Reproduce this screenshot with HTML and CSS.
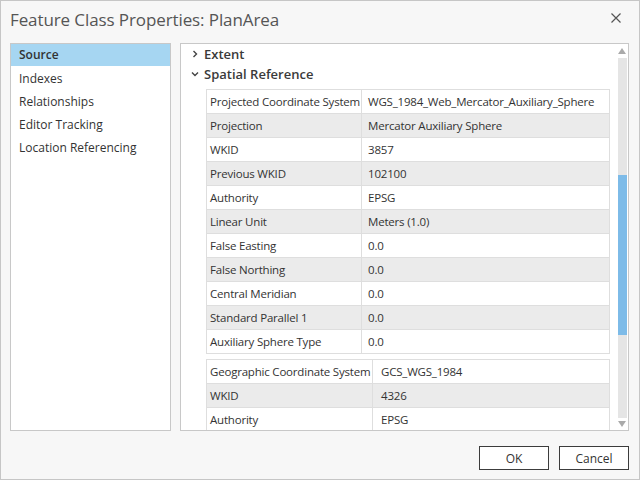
FILE: index.html
```html
<!DOCTYPE html>
<html>
<head>
<meta charset="utf-8">
<link rel="stylesheet" href="styles.css">
</head>
<body>
<div class="dialog">
  <div class="titlebar">
    <span class="title">Feature Class Properties: PlanArea</span>
    <span class="close">
      <svg width="10" height="10" viewBox="0 0 10 10"><path d="M0.5 0.5L9.5 9.5M9.5 0.5L0.5 9.5" stroke="#555" stroke-width="1.2" fill="none"/></svg>
    </span>
  </div>
  <div class="main">
    <div class="nav">
      <div class="nav-item selected">Source</div>
      <div class="nav-item">Indexes</div>
      <div class="nav-item">Relationships</div>
      <div class="nav-item">Editor Tracking</div>
      <div class="nav-item">Location Referencing</div>
    </div>
    <div class="panel">
      <div class="content">
        <div class="section">
          <svg class="chev" width="8" height="8" viewBox="0 0 8 8"><path d="M2.5 1L5.5 4L2.5 7" stroke="#444" stroke-width="1.4" fill="none"/></svg>
          <span>Extent</span>
        </div>
        <div class="section">
          <svg class="chev" width="8" height="8" viewBox="0 0 8 8"><path d="M1 2.5L4 5.5L7 2.5" stroke="#444" stroke-width="1.4" fill="none"/></svg>
          <span>Spatial Reference</span>
        </div>
        <table class="props t1">
          <colgroup><col class="kc"><col></colgroup>
          <tr><td class="k">Projected Coordinate System</td><td>WGS_1984_Web_Mercator_Auxiliary_Sphere</td></tr>
          <tr class="alt"><td class="k">Projection</td><td>Mercator Auxiliary Sphere</td></tr>
          <tr><td class="k">WKID</td><td>3857</td></tr>
          <tr class="alt"><td class="k">Previous WKID</td><td>102100</td></tr>
          <tr><td class="k">Authority</td><td>EPSG</td></tr>
          <tr class="alt"><td class="k">Linear Unit</td><td>Meters (1.0)</td></tr>
          <tr><td class="k">False Easting</td><td>0.0</td></tr>
          <tr class="alt"><td class="k">False Northing</td><td>0.0</td></tr>
          <tr><td class="k">Central Meridian</td><td>0.0</td></tr>
          <tr class="alt"><td class="k">Standard Parallel 1</td><td>0.0</td></tr>
          <tr><td class="k">Auxiliary Sphere Type</td><td>0.0</td></tr>
        </table>
        <table class="props t2">
          <colgroup><col class="kc"><col></colgroup>
          <tr><td class="k">Geographic Coordinate System</td><td>GCS_WGS_1984</td></tr>
          <tr class="alt"><td class="k">WKID</td><td>4326</td></tr>
          <tr><td class="k">Authority</td><td>EPSG</td></tr>
        </table>
      </div>
      <div class="scrollbar">
        <div class="arrow up"></div>
        <div class="track"><div class="thumb"></div></div>
        <div class="arrow down"></div>
      </div>
    </div>
  </div>
  <div class="footer">
    <button class="btn">OK</button>
    <button class="btn">Cancel</button>
  </div>
</div>
</body>
</html>
```
FILE: styles.css
```css
* { box-sizing: border-box; }
html, body { margin: 0; padding: 0; }
body {
  font-family: "Open Sans", "Noto Sans", sans-serif;
  color: #333;
  background: #f7f7f7;
}
.dialog {
  width: 640px;
  height: 480px;
  border: 1px solid #c6c6c6;
  background: #f7f7f7;
  display: flex;
  flex-direction: column;
}
.titlebar {
  height: 36px;
  display: flex;
  align-items: center;
  justify-content: space-between;
  padding: 0 18px 0 9px;
}
.title {
  font-size: 17px;
  color: #555;
  letter-spacing: -0.1px;
}
.close { display: flex; margin-top: -2px; }
.main {
  display: flex;
  height: 388px;
  margin-top: 6px;
  padding-left: 9px;
  gap: 9px;
}
.nav {
  width: 161px;
  border: 1px solid #c8c8c8;
  background: #fff;
}
.nav-item {
  height: 23px;
  line-height: 22px;
  padding-top: 2px;
  padding-left: 8px;
  font-size: 12px;
  color: #333;
}
.nav-item.selected {
  height: 22px;
  padding-top: 0;
  background: #a6d6f2;
  font-weight: 600;
}
.panel {
  width: 449px;
  border: 1px solid #c8c8c8;
  background: #fff;
  display: flex;
  overflow: hidden;
}
.content {
  flex: 1;
  overflow: hidden;
}
.section {
  height: 20px;
  display: flex;
  align-items: center;
  font-size: 13px;
  font-weight: 600;
  color: #3a3a3a;
  padding-left: 10px;
}
.section .chev { margin-right: 5px; }
.props {
  border-collapse: collapse;
  table-layout: fixed;
  margin-left: 25px;
  width: 404px;
  font-size: 11.5px;
  letter-spacing: -0.2px;
  color: #333;
  border: 1px solid #c8c8c8;
}
.props td {
  height: 24px;
  padding: 0 0 0 3px;
  border: 1px solid #dedede;
  white-space: nowrap;
  overflow: hidden;
}
.props tr.alt td { background: #ebebeb; }
.t1 { margin-top: 5px; }
.t1 .kc { width: 155px; }
.t1 td:not(.k) { padding-left: 6px; }
.t2 { margin-top: 5px; }
.t2 .kc { width: 166px; }
.t2 td:not(.k) { padding-left: 8px; }
.scrollbar {
  width: 12px;
  display: flex;
  flex-direction: column;
  align-items: center;
  padding: 3px 0 2px;
}
.arrow {
  width: 0; height: 0;
  border-left: 4px solid transparent;
  border-right: 4px solid transparent;
}
.arrow.up { border-bottom: 6px solid #aaa; margin: 1px 0 4px; }
.arrow.down { border-top: 6px solid #aaa; margin: 3px 0 1px; }
.track {
  flex: 1;
  width: 9px;
  background: #e5e5e5;
  padding-top: 117px;
}
.thumb {
  height: 160px;
  background: #7dbbe8;
}
.footer {
  flex: 1;
  display: flex;
  justify-content: flex-end;
  align-items: flex-start;
  gap: 10px;
  padding: 15px 10px 0 0;
}
.btn {
  width: 70px;
  height: 24px;
  border: 1px solid #3c3c3c;
  background: #fff;
  font-family: "Open Sans", "Noto Sans", sans-serif;
  font-size: 12px;
  color: #333;
  padding: 0;
}
```
